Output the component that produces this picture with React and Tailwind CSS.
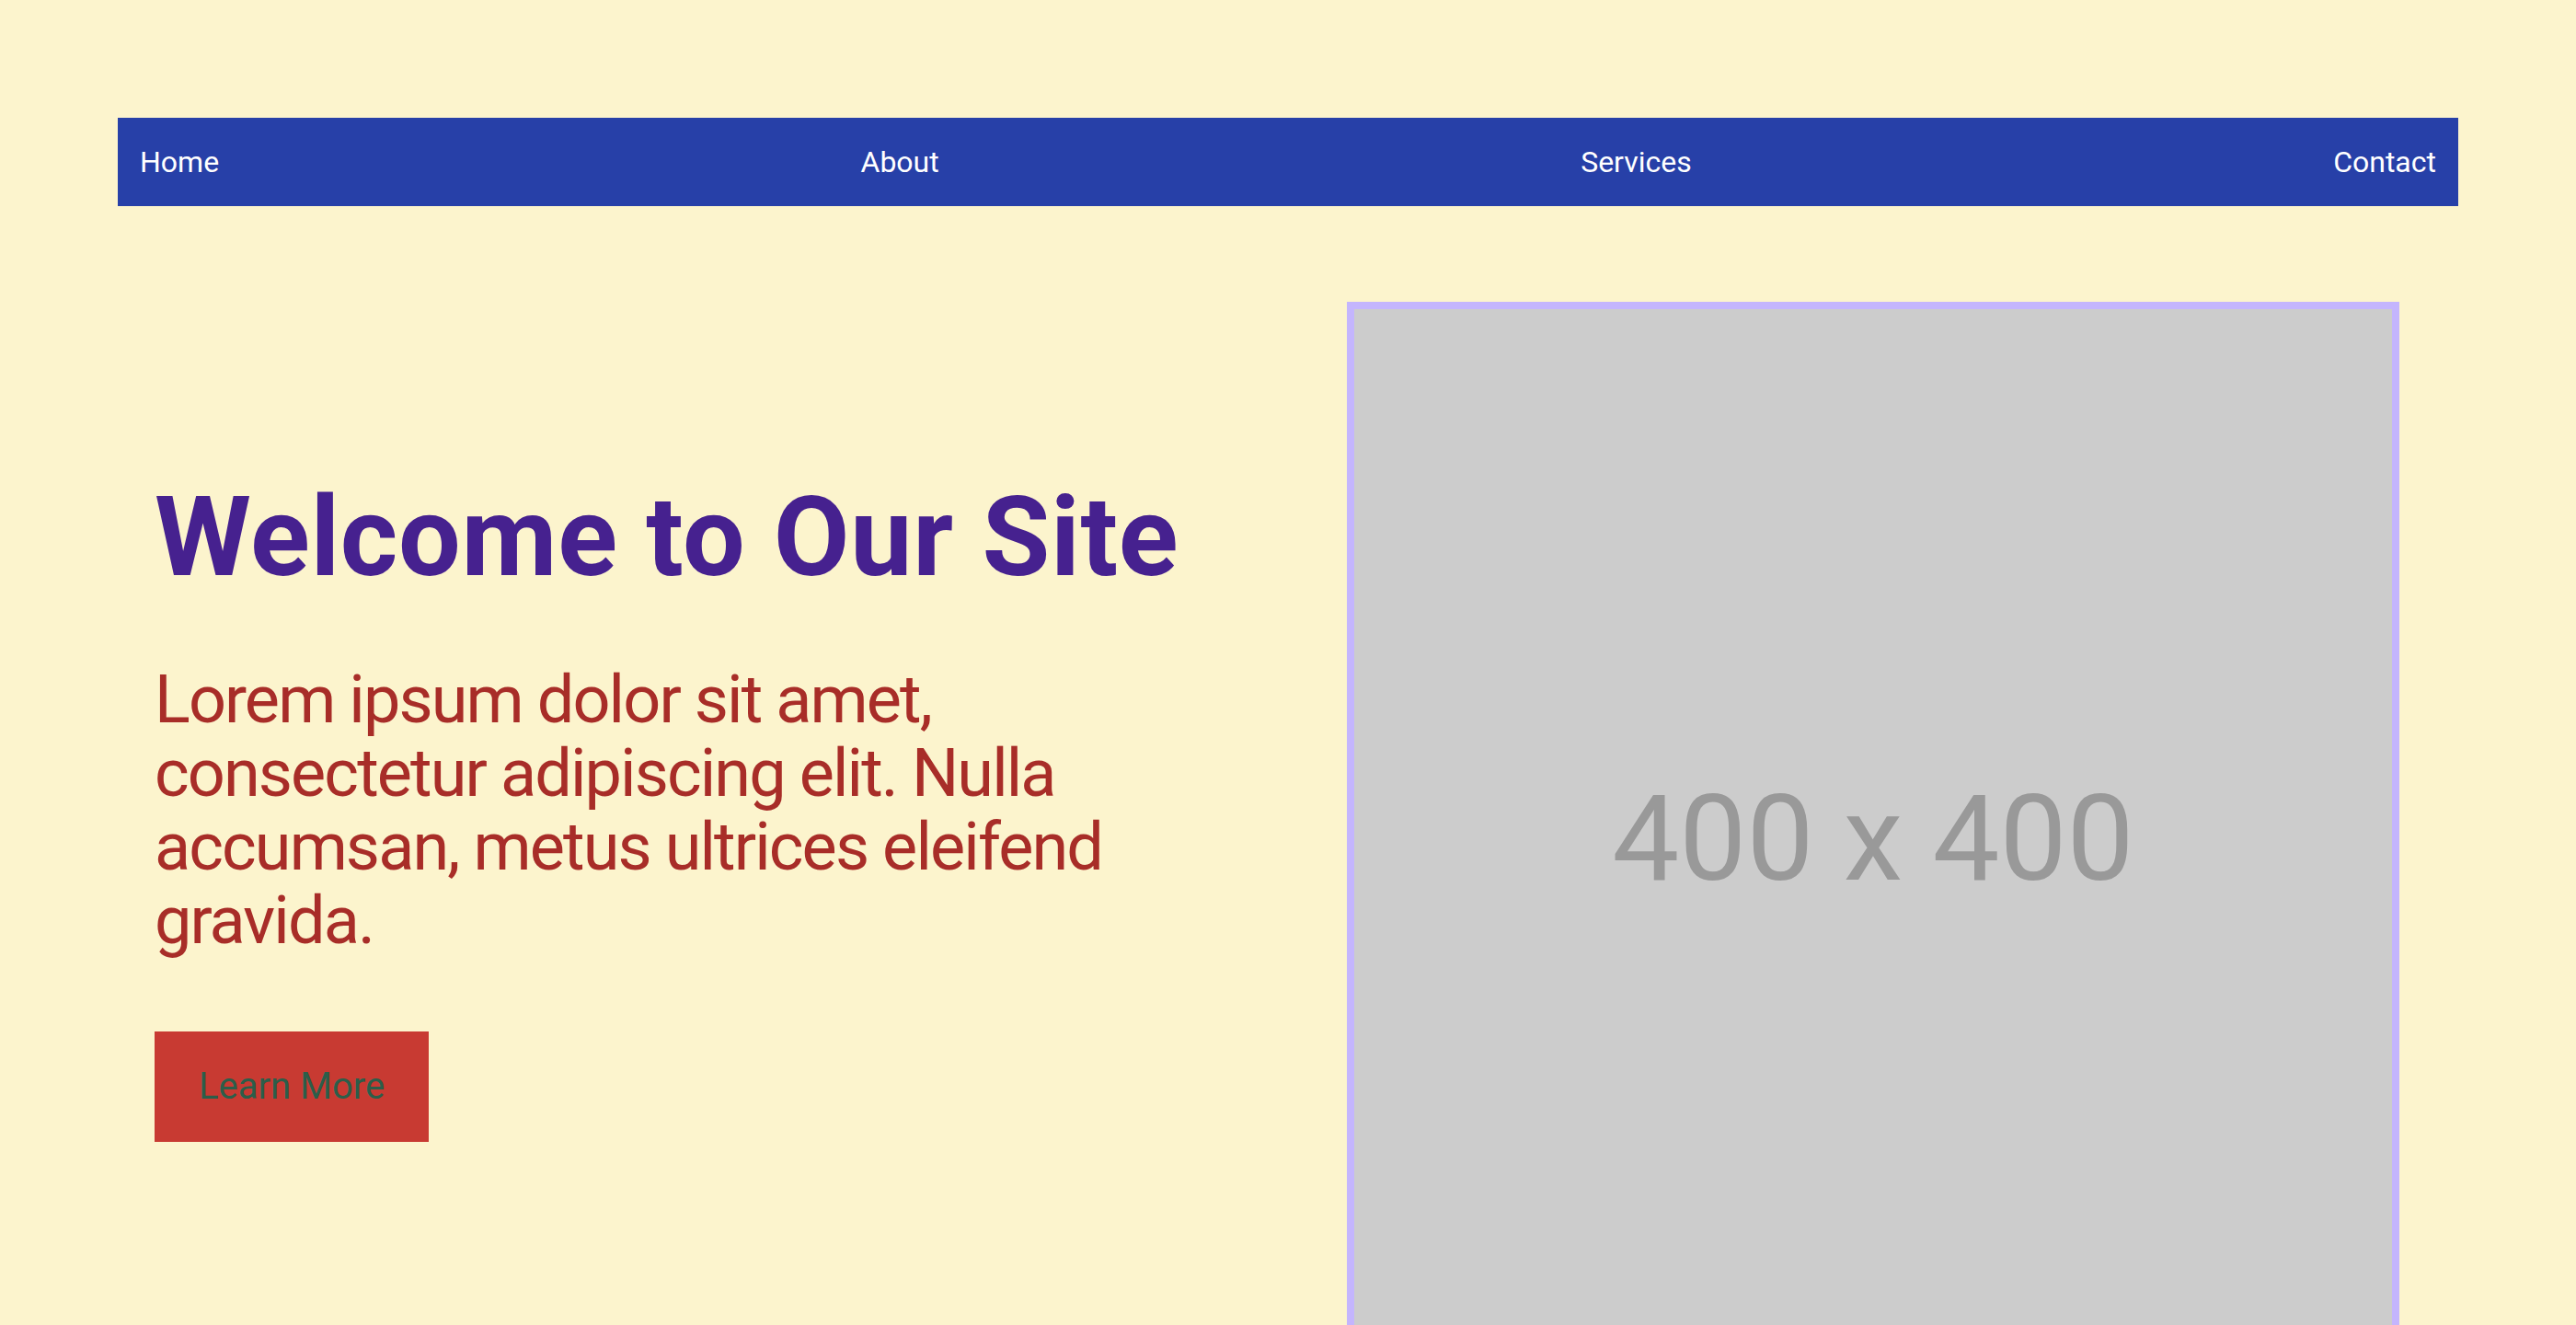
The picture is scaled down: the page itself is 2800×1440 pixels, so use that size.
import React from "react";

const links = ["Home", "About", "Services", "Contact"];

const App = () => {
    return (
        <div className="min-h-screen bg-[#fcf4cd] px-[128px] pt-[128px] font-['Roboto',sans-serif]">
            <nav className="flex justify-between bg-[#2740a8] px-[24px] py-[24px] text-[32px] leading-[48px] text-white">
                {links.map((link) => (
                    <a key={link} href="#">
                        {link}
                    </a>
                ))}
            </nav>

            <section className="mt-[40px] grid grid-cols-2">
                {/* left: copy + call to action */}
                <div className="flex flex-col justify-center px-[40px] pb-[36px]">
                    <h1 className="mb-[77px] text-[120px] font-bold leading-none tracking-[0.7px] text-[#46218f]">Welcome to Our Site</h1>
                    <p className="mb-[80px] text-[72px] leading-[80px] tracking-[-1.9px] text-[#a82d28]">
                        Lorem ipsum dolor sit amet, consectetur adipiscing elit. Nulla accumsan, metus ultrices eleifend gravida.
                    </p>
                    <button className="self-start bg-[#c83a32] px-[48px] py-[32px] text-[40px] leading-[56px] text-[#2b5e4a]">
                        Learn More
                    </button>
                </div>

                {/* right: placeholder image */}
                <div className="p-[64px]">
                    <div className="flex aspect-square w-full items-center justify-center border-[8px] border-[#c4b5fd] bg-[#cccccc]">
                        <span className="mt-[24px] text-[130px] leading-none text-[#999999]">400 x 400</span>
                    </div>
                </div>
            </section>
        </div>
    );
};

export default App;
